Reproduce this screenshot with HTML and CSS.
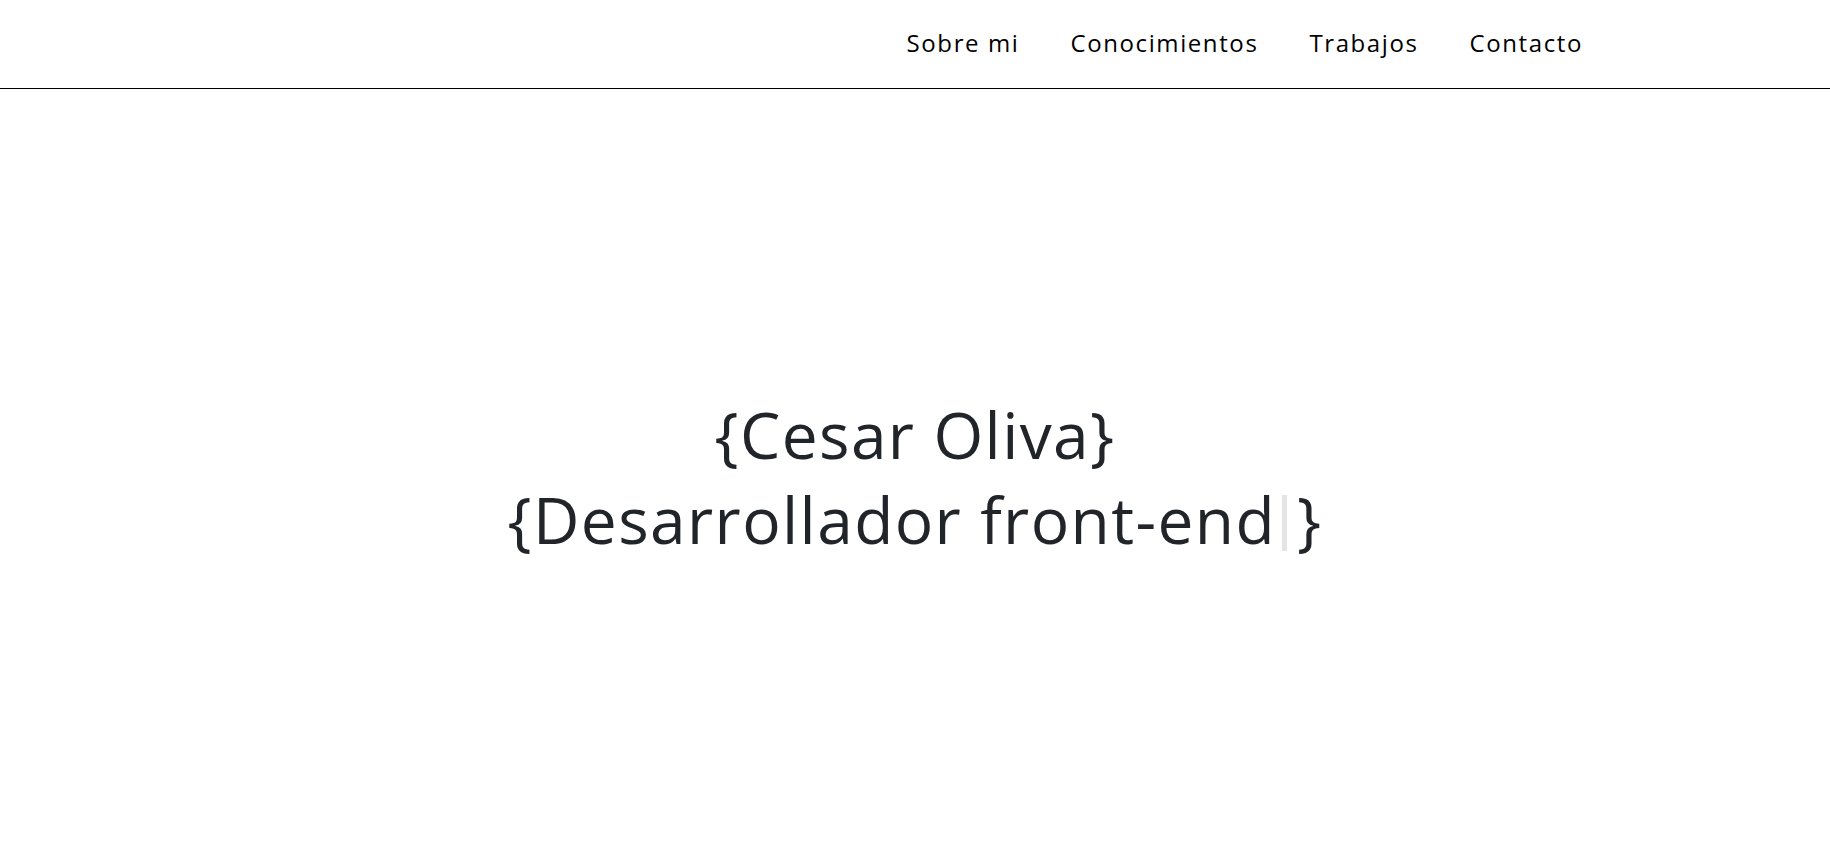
FILE: index.html
```html
<!DOCTYPE html>
<html lang="es">
<head>
<meta charset="utf-8">
<title>Cesar Oliva</title>
<link rel="stylesheet" href="styles.css">
</head>
<body>
<header class="header">
  <nav class="nav">
    <a class="nav-link" href="#sobre">Sobre mi</a>
    <a class="nav-link" href="#conocimientos">Conocimientos</a>
    <a class="nav-link" href="#trabajos">Trabajos</a>
    <a class="nav-link" href="#contacto">Contacto</a>
  </nav>
</header>
<main class="hero">
  <h1 class="title">
    <span class="line">{Cesar Oliva}</span>
    <span class="line">{Desarrollador front-end<span class="cursor"></span>}</span>
  </h1>
</main>
</body>
</html>
```

FILE: styles.css
```css
* { box-sizing: border-box; }
html, body { margin: 0; padding: 0; background: #ffffff; }
body { font-family: "Open Sans", "Noto Sans", sans-serif; color: #212529; }

.header {
  height: 89px;
  border-bottom: 1px solid #000;
  display: flex;
  justify-content: flex-end;
  align-items: center;
  padding-right: 247px;
  padding-bottom: 2px;
}
.nav { display: flex; gap: 51px; align-items: center; }
.nav-link {
  color: #000;
  text-decoration: none;
  font-size: 24px;
  letter-spacing: 1.6px;
  line-height: 1;
}

.hero {
  height: 769px;
  display: flex;
  justify-content: center;
  align-items: center;
  padding-top: 7px;
}
.title {
  margin: 0;
  font-weight: 400;
  font-size: 64px;
  letter-spacing: 1.4px;
  line-height: 85px;
  text-align: center;
  color: #212529;
}
.line { display: block; }
.cursor {
  display: inline-block;
  width: 5px;
  height: 56px;
  background: #e4e4e4;
  margin: 0 10px 0 6px;
  vertical-align: -7px;
}
```
